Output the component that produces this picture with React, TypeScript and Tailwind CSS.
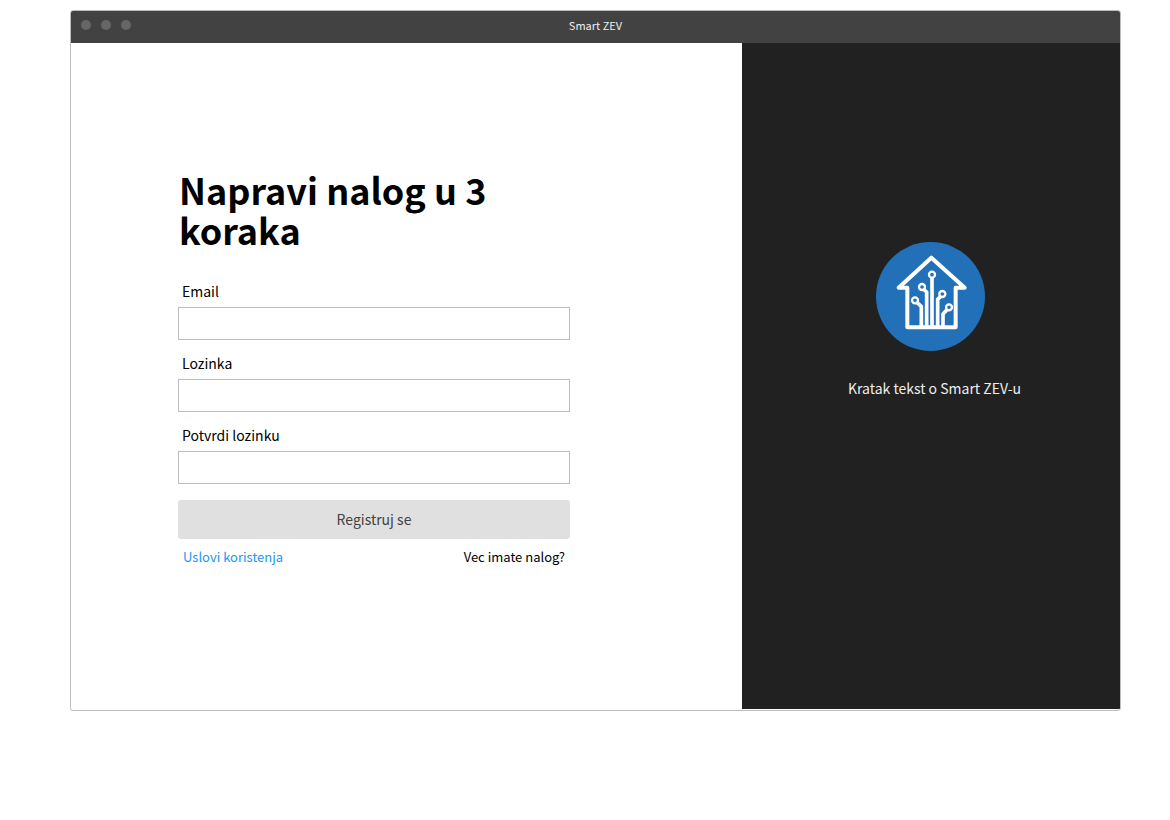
function Logo() {
  return (
    <svg
      viewBox="18 18 327 327"
      className="size-[109px]"
      fill="none"
      stroke="#fff"
      strokeLinejoin="round"
      role="img"
      aria-label="Smart ZEV logo"
    >
      <circle cx="181.5" cy="181.5" r="163.5" fill="#2271b8" stroke="none" />
      <path d="M184 65 86 155H112V274H257V155H284Z" strokeWidth="12" />
      <g strokeWidth="11">
        <path d="M186 126V272" />
        <path d="M161 160 170 168V272" />
        <path d="M141 200 154 211V272" />
        <path d="M212 181 203 190V272" />
        <path d="M231 221 219 234V272" />
      </g>
      <g strokeWidth="7">
        <circle cx="186" cy="116" r="9" />
        <circle cx="156" cy="153" r="9" />
        <circle cx="135" cy="193" r="9" />
        <circle cx="217" cy="174" r="9" />
        <circle cx="237" cy="214" r="9" />
      </g>
    </svg>
  );
}

type FieldProps = { id: string; label: string; type: string };

function Field({ id, label, type }: FieldProps) {
  return (
    <div className="flex flex-col">
      <label htmlFor={id} className="pl-1 leading-6">
        {label}
      </label>
      <input
        id={id}
        type={type}
        className="mt-1 h-[33px] w-full border border-[#bdbdbd] bg-white px-2 outline-none focus:border-[#2196f3]"
      />
    </div>
  );
}

export default function App() {
  return (
    <div className="bg-white pt-[10px] pr-[49px] pl-[70px] font-['Noto_Sans_CJK_SC',sans-serif] text-[14px] text-black">
      <div className="flex min-h-[701px] flex-col overflow-hidden rounded-[3px] border border-[#bdbdbd]">
        <header className="grid h-8 grid-cols-[1fr_auto_1fr] items-center bg-[#424242] px-[10px] pb-1">
          <div className="flex gap-[10px]">
            <span className="size-[10px] rounded-full bg-[#666]" />
            <span className="size-[10px] rounded-full bg-[#666]" />
            <span className="size-[10px] rounded-full bg-[#666]" />
          </div>
          <span className="text-[11px] leading-4 text-[#eee]">Smart ZEV</span>
        </header>
        <div className="flex grow">
          <main className="grow pt-[126px] pl-[107px]">
            <form className="w-[392px]" onSubmit={(e) => e.preventDefault()}>
              <h1 className="pl-px text-[36px] leading-10 font-bold">
                Napravi nalog u 3 koraka
              </h1>
              <div className="mt-[30px] flex flex-col gap-[11px]">
                <Field id="email" label="Email" type="email" />
                <Field id="password" label="Lozinka" type="password" />
                <Field id="confirm" label="Potvrdi lozinku" type="password" />
              </div>
              <button
                type="submit"
                className="mt-4 h-[39px] w-full rounded-[3px] bg-[#e0e0e0] text-[#424242]"
              >
                Registruj se
              </button>
              <div className="mt-2 flex justify-between px-[5px] text-[13px] leading-5">
                <a href="#uslovi" className="text-[#2196f3]">
                  Uslovi koristenja
                </a>
                <a href="#prijava">Vec imate nalog?</a>
              </div>
            </form>
          </main>
          <aside className="mb-px flex w-[378px] shrink-0 flex-col items-center bg-[#212121] pt-[199px] pr-px text-[#eee]">
            <Logo />
            <p className="mt-[25px] pl-2 leading-6">Kratak tekst o Smart ZEV-u</p>
          </aside>
        </div>
      </div>
    </div>
  );
}
